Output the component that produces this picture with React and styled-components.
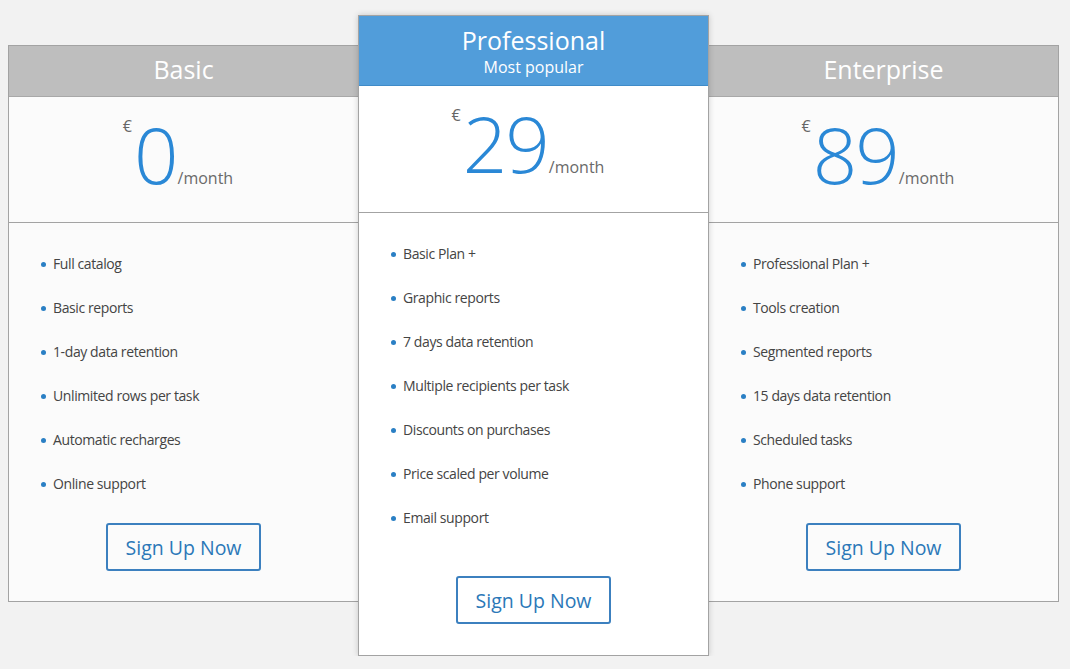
import React from 'react';
import styled, { createGlobalStyle } from 'styled-components';

const GlobalStyle = createGlobalStyle`
  body {
    margin: 8px;
    background: #f2f2f2;
    font-family: "Open Sans", "Liberation Sans", sans-serif;
  }
`;

const Row = styled.div`
  display: flex;
  align-items: flex-start;
  padding-top: 7px;
`;

const Card = styled.div`
  box-sizing: border-box;
  width: 351px;
  margin-top: ${props => props.featured ? 0 : 30}px;
  margin-left: ${props => props.featured ? -1 : 0}px;
  margin-right: ${props => props.featured ? -1 : 0}px;
  border: 1px solid #a3a3a3;
  background: ${props => props.featured ? '#ffffff' : '#fbfbfb'};
  box-shadow: ${props => props.featured ? '0 0 6px rgba(0,0,0,0.18)' : 'none'};
  position: relative;
  z-index: ${props => props.featured ? 1 : 0};
  display: flex;
  flex-direction: column;
`;

const Header = styled.div`
  box-sizing: border-box;
  height: ${props => props.featured ? 70 : 51}px;
  padding: ${props => props.featured ? '9px 0 0' : '0 0 4px'};
  background: ${props => props.featured ? '#519dda' : '#bebebe'};
  border-bottom: 1px solid ${props => props.featured ? '#3f8bc8' : '#a8a8a8'};
  color: #fff;
  display: flex;
  flex-direction: column;
  align-items: center;
  justify-content: ${props => props.featured ? 'flex-start' : 'center'};
`;

const Title = styled.div`
  font-size: 25px;
  line-height: 30px;
`;

const Subtitle = styled.div`
  font-size: 16px;
  line-height: 24px;
`;

const PriceBox = styled.div`
  box-sizing: border-box;
  height: ${props => props.featured ? 127 : 126}px;
  border-bottom: 1px solid #a3a3a3;
  display: flex;
  justify-content: center;
  align-items: baseline;
  padding: 11px 11px 0 0;
`;

const Currency = styled.span`
  align-self: flex-start;
  font-size: 16px;
  color: #666;
  margin-top: 7px;
  margin-right: 2px;
`;

const Amount = styled.span`
  font-size: 78px;
  font-weight: 300;
  color: #2a88d6;
  line-height: 92px;
  letter-spacing: -2px;
`;

const Period = styled.span`
  font-size: 16px;
  color: #6a6a6a;
  margin-left: 1px;
`;

const Features = styled.ul`
  list-style: none;
  margin: 0;
  padding: 18px 0 0 32px;
`;

const Feature = styled.li`
  height: 44px;
  display: flex;
  align-items: center;
  font-size: 14px;
  color: #444;
  letter-spacing: -0.4px;

  &::before {
    content: '';
    width: 5px;
    height: 5px;
    border-radius: 50%;
    background: #2a7fc4;
    margin-right: 7px;
    margin-top: 3px;
  }
`;

const Footer = styled.div`
  display: flex;
  justify-content: center;
  padding: ${props => props.featured ? '37px 0 31px' : '18px 0 30px'};
`;

const Button = styled.a`
  box-sizing: border-box;
  width: 155px;
  height: 48px;
  border: 2px solid #3c80bf;
  border-radius: 3px;
  display: flex;
  align-items: center;
  justify-content: center;
  font-size: 19.5px;
  color: #2b78b8;
  text-decoration: none;
  background: transparent;
  cursor: pointer;
`;

const plans = [
  {
    name: 'Basic',
    price: '0',
    features: ['Full catalog', 'Basic reports', '1-day data retention', 'Unlimited rows per task', 'Automatic recharges', 'Online support'],
  },
  {
    name: 'Professional',
    tag: 'Most popular',
    price: '29',
    featured: true,
    features: ['Basic Plan +', 'Graphic reports', '7 days data retention', 'Multiple recipients per task', 'Discounts on purchases', 'Price scaled per volume', 'Email support'],
  },
  {
    name: 'Enterprise',
    price: '89',
    features: ['Professional Plan +', 'Tools creation', 'Segmented reports', '15 days data retention', 'Scheduled tasks', 'Phone support'],
  },
];

const App = () => (
  <>
    <GlobalStyle />
    <Row>
      {plans.map(plan => (
        <Card key={plan.name} featured={plan.featured}>
          <Header featured={plan.featured}>
            <Title>{plan.name}</Title>
            {plan.tag && <Subtitle>{plan.tag}</Subtitle>}
          </Header>
          <PriceBox featured={plan.featured}>
            <Currency>€</Currency>
            <Amount>{plan.price}</Amount>
            <Period>/month</Period>
          </PriceBox>
          <Features>
            {plan.features.map(f => <Feature key={f}>{f}</Feature>)}
          </Features>
          <Footer featured={plan.featured}>
            <Button>Sign Up Now</Button>
          </Footer>
        </Card>
      ))}
    </Row>
  </>
);

export default App;
